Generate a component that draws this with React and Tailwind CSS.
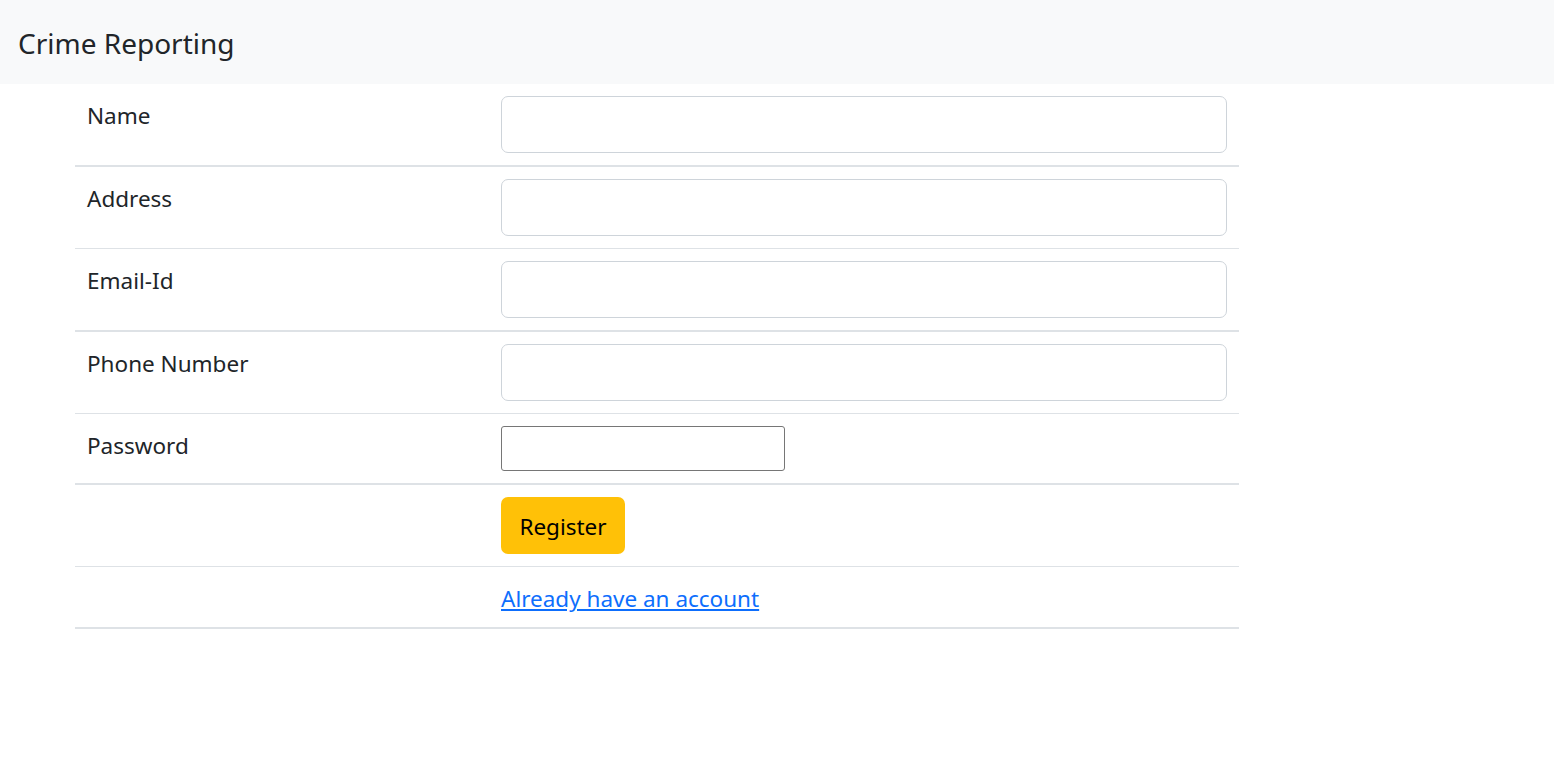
export default function App() {
  const fields = [
    { label: 'Name', thick: true },
    { label: 'Address', thick: false },
    { label: 'Email-Id', thick: true },
    { label: 'Phone Number', thick: false },
  ]

  return (
    <div className="min-h-[780px] bg-white text-[#212529] font-['Noto_Sans',sans-serif]">
      <nav className="h-[84px] bg-[#f8f9fa] flex items-center px-[18px]">
        <span className="text-[28px] leading-none pt-[2px]">Crime Reporting</span>
      </nav>

      <div className="ml-[75px] w-[1164px]">
        {fields.map(f => (
          <div key={f.label}
            className={`grid grid-cols-[414px_750px] border-[#dee2e6] ${f.thick ? 'border-b-2' : 'border-b'}`}>
            <div className="px-[12px] pt-[15px] text-[22.5px] leading-[34px]">{f.label}</div>
            <div className="p-[12px]">
              <input type="text" className="block w-full h-[57px] border border-[#ced4da] rounded-[7px] px-3 text-[20px] outline-none" />
            </div>
          </div>
        ))}

        <div className="grid grid-cols-[414px_750px] border-b-2 border-[#dee2e6]">
          <div className="px-[12px] pt-[15px] text-[22.5px] leading-[34px]">Password</div>
          <div className="p-[12px]">
            <input type="password" className="block w-[284px] h-[45px] border border-[#767676] rounded-[3px] px-2 outline-none" />
          </div>
        </div>

        <div className="grid grid-cols-[414px_750px] border-b border-[#dee2e6]">
          <div />
          <div className="p-[12px]">
            <button className="h-[57px] w-[124px] bg-[#ffc107] rounded-[7px] text-[22.5px] text-black pt-[2px]">Register</button>
          </div>
        </div>

        <div className="grid grid-cols-[414px_750px] border-b-2 border-[#dee2e6] h-[62px]">
          <div />
          <div className="px-[12px] pt-[15px] text-[22.5px] leading-[34px]">
            <a href="#" className="text-[#0d6efd] underline">Already have an account</a>
          </div>
        </div>
      </div>
    </div>
  )
}
